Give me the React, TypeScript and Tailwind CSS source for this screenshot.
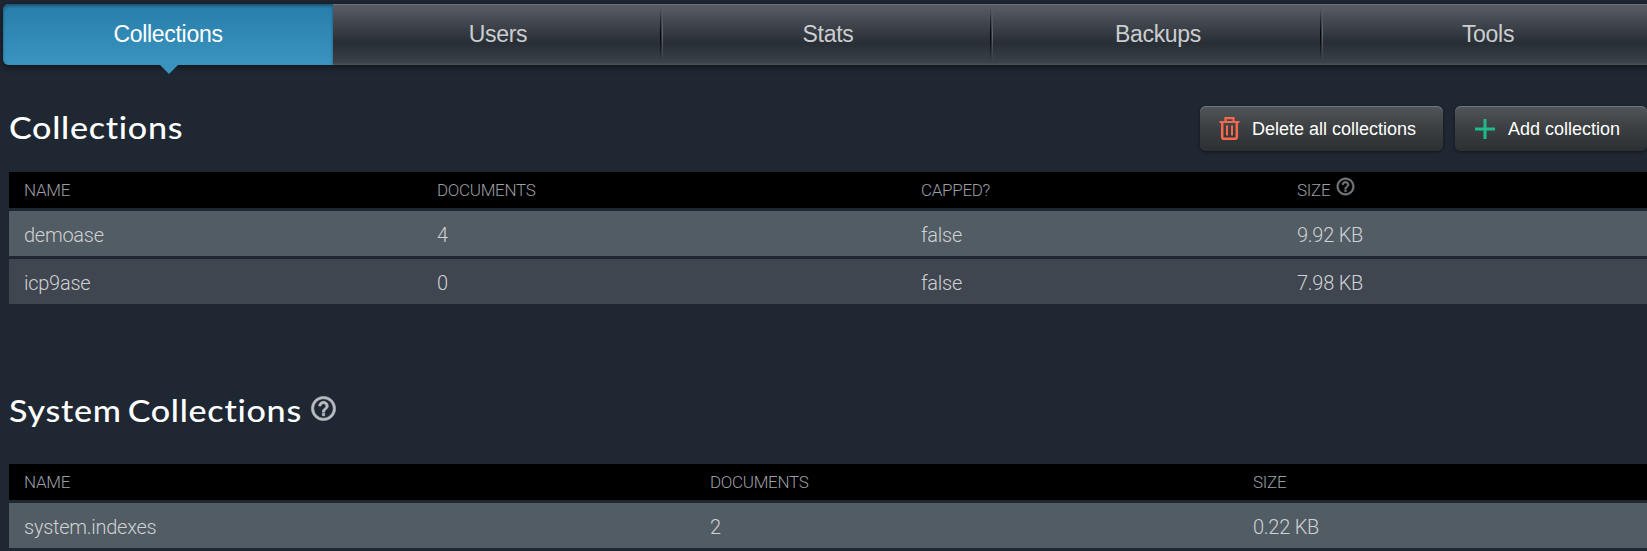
import React from 'react';

const tabs = ['Collections', 'Users', 'Stats', 'Backups', 'Tools'];

function HelpIcon({ className }: { className: string }) {
  return (
    <svg viewBox="0 0 24 24" fill="currentColor" stroke="currentColor" strokeWidth="0.5" className={className}>
      <path d="M11 18h2v-2h-2v2zm1-16C6.48 2 2 6.48 2 12s4.48 10 10 10 10-4.48 10-10S17.52 2 12 2zm0 18c-4.41 0-8-3.59-8-8s3.59-8 8-8 8 3.59 8 8-3.590 8-8 8zm0-14c-2.210 0-4 1.790-4 4h2c0-1.100.9-2 2-2s2 .9 2 2c0 2-3 1.750-3 5h2c0-2.250 3-2.500 3-5 0-2.210-1.790-4-4-4z" />
    </svg>
  );
}

function TrashIcon() {
  return (
    <svg viewBox="0 0 21 23" fill="none" stroke="#f8684c" className="h-[23px] w-[21px] shrink-0">
      <path d="M0.500 5H20.500M6.500 5V1.200H14.500V5" strokeWidth="2.200" />
      <path d="M3.200 5V20.300Q3.200 21.800 4.700 21.800H16.300Q17.800 21.800 17.800 20.300V5" strokeWidth="2.500" />
      <path d="M8 8.500V18.500M13 8.500V18.500" strokeWidth="2" />
    </svg>
  );
}

function PlusIcon() {
  return (
    <svg viewBox="0 0 20 20" fill="none" stroke="#20b98a" strokeWidth="3" className="size-5 shrink-0">
      <path d="M0 10H20M10 0V20" />
    </svg>
  );
}

function Button({ icon, label, className }: { icon: React.ReactNode; label: string; className: string }) {
  return (
    <button
      className={`flex h-[45px] shrink-0 items-center rounded-md bg-linear-to-b from-[#50565a] via-[#3c3f41] to-[#2c3033] font-['Liberation_Sans',sans-serif] text-[18px] whitespace-nowrap text-white shadow-[inset_0_1px_0_#72777b,0_1px_3px_rgba(0,0,0,0.5)] ${className}`}
    >
      {icon}
      <span className="pt-0.5">{label}</span>
    </button>
  );
}

function Heading({ children }: { children: React.ReactNode }) {
  return (
    <h2 className="w-[300px] origin-left scale-x-110 font-['Lato',sans-serif] text-[31px] leading-[45px] font-medium tracking-[0.65px] whitespace-nowrap text-white [word-spacing:-3px]">
      {children}
    </h2>
  );
}

function Table({ columns, head, rows }: { columns: string; head: React.ReactNode[]; rows: string[][] }) {
  return (
    <div className="ml-[9px] flex flex-col gap-[3px] font-['Roboto',sans-serif] font-light">
      <div className={`grid h-9 items-center bg-black pt-0.5 pl-[15px] text-[17px] tracking-[-0.3px] text-[#9a9fa3] ${columns}`}>
        {head.map((cell, i) => (
          <div key={i} className="flex h-6 items-center">{cell}</div>
        ))}
      </div>
      {rows.map((row) => (
        <div
          key={row[0]}
          className={`grid h-[45px] items-center pt-0.5 pl-[15px] text-[20px] tracking-[-0.26px] text-[#cfd1d3] even:bg-[#525c64] odd:bg-[#404650] ${columns}`}
        >
          {row.map((cell, i) => (
            <div key={i}>{cell}</div>
          ))}
        </div>
      ))}
    </div>
  );
}

export default function App() {
  return (
    <div className="h-[551px] w-full overflow-hidden bg-[#1e2732] pt-1">
      <nav className="ml-[3px] flex h-[61px] w-[1650px] rounded-md bg-[linear-gradient(#5b5e67_0%,#42474f_30%,#282e35_64%,#3b4149_96%,#50555b_100%)] font-['Liberation_Sans',sans-serif] text-[23px] shadow-[inset_0_1px_0_#6b7078,0_2px_6px_rgba(0,0,0,0.5)]">
        {tabs.map((tab, i) => (
          <div
            key={tab}
            className={
              i === 0
                ? 'relative flex w-[330px] items-center justify-center rounded-l-md bg-linear-to-b from-[#277dab] to-[#3a94bf] text-white shadow-[inset_0_2px_3px_rgba(0,0,0,0.35)]'
                : 'relative flex w-[330px] items-center justify-center text-[#cccdcf]'
            }
          >
            <span className="tracking-[-0.3px]">{tab}</span>
            {i === 0 && (
              <svg viewBox="0 0 18 9" className="absolute top-full left-[157px] h-[9px] w-[18px]">
                <path d="M0 0H18L9 9Z" fill="#3a94bf" />
              </svg>
            )}
            {i > 1 && (
              <div className="absolute top-1 -left-[3px] flex h-[53px] gap-px">
                <div className="w-px bg-linear-to-b from-transparent via-black to-transparent" />
                <div className="w-px bg-linear-to-b from-transparent via-[#646970] to-transparent" />
              </div>
            )}
          </div>
        ))}
      </nav>

      <div className="mt-[41px] flex h-[45px] items-center justify-between pl-[9px]">
        <div className="-mt-0.5">
          <Heading>Collections</Heading>
        </div>
        <div className="flex gap-3">
          <Button icon={<TrashIcon />} label="Delete all collections" className="w-[243px] gap-3 pl-[19px]" />
          <Button icon={<PlusIcon />} label="Add collection" className="w-[192px] gap-[13px] pl-5" />
        </div>
      </div>

      <div className="mt-[21px]">
        <Table
          columns="grid-cols-[413px_484px_376px_1fr]"
          head={[
            'NAME',
            'DOCUMENTS',
            'CAPPED?',
            <>
              SIZE
              <HelpIcon className="mb-[9px] ml-[5px] size-[21px] text-[#74797d]" />
            </>,
          ]}
          rows={[
            ['demoase', '4', 'false', '9.92 KB'],
            ['icp9ase', '0', 'false', '7.98 KB'],
          ]}
        />
      </div>

      <div className="mt-[84px] flex h-[45px] items-center pl-[9px]">
        <Heading>System Collections</Heading>
        <HelpIcon className="mb-1 size-[29px] text-[#b9bdc1]" />
      </div>

      <div className="mt-[31px]">
        <Table
          columns="grid-cols-[686px_543px_1fr]"
          head={['NAME', 'DOCUMENTS', 'SIZE']}
          rows={[['system.indexes', '2', '0.22 KB']]}
        />
      </div>
    </div>
  );
}
